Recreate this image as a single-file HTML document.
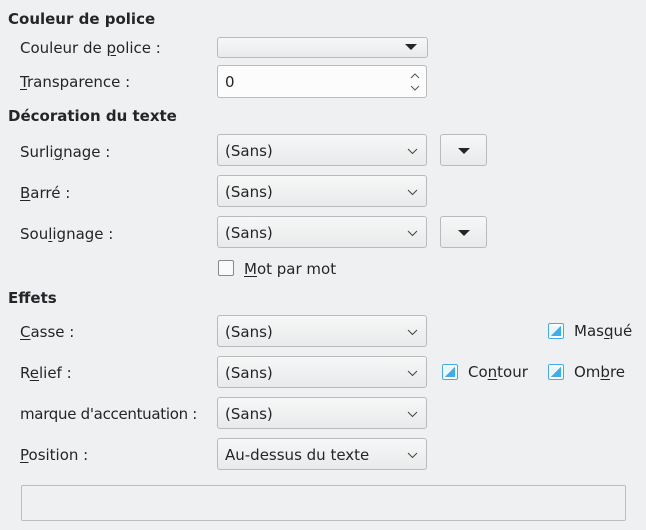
<!DOCTYPE html>
<html><head><meta charset="utf-8"><style>
body{margin:0;width:646px;height:530px;background:#eff0f1;font-family:"DejaVu Sans","Liberation Sans",sans-serif;font-size:15px;color:#232629;position:relative;overflow:hidden}
.a{position:absolute;white-space:nowrap}
.h{font-weight:bold;left:8px}
.l{left:20px}
.cb{position:absolute;left:217px;width:208px;height:30px;border:1px solid #b8babc;border-radius:3px;background:linear-gradient(#f6f7f7,#e9eaeb);box-sizing:content-box}
.cb span{position:absolute;left:7px;top:7px}
.cb svg{position:absolute;right:8px;top:13px}
.btn{position:absolute;left:440px;width:45px;height:30px;border:1px solid #b8babc;border-radius:3px;background:linear-gradient(#f6f7f7,#e9eaeb)}
.tri{position:absolute;width:0;height:0;border-left:6px solid transparent;border-right:6px solid transparent;border-top:6px solid #232629}
.ck{position:absolute;width:14px;height:14px;border:1px solid #3daee9;border-radius:2px;background:#fff}
.ck i{position:absolute;left:2px;top:2px;width:10px;height:10px;background:linear-gradient(135deg,#eaf6fd 50%,#3daee9 50%)}
u{text-decoration:underline;text-underline-offset:2px}
</style></head><body>
<div class="a h" style="top:10px">Couleur de police</div>
<div class="a l" style="top:39px">Couleur de <u>p</u>olice :</div>
<div class="cb" style="top:37px;height:19px;width:209px"><div class="tri" style="right:10px;top:6px"></div></div>
<div class="a l" style="top:73px"><u>T</u>ransparence :</div>
<div class="a" style="left:217px;top:65px;width:208px;height:31px;border:1px solid #b8babc;border-radius:3px;background:#fcfcfc"><span class="a" style="left:7px;top:7px">0</span>
<svg class="a" style="right:5px;top:5px" width="12" height="22"><path d="M2 7 L6 3 L10 7 M2 15 L6 19 L10 15" fill="none" stroke="#555" stroke-width="1"/></svg></div>
<div class="a h" style="top:107px">Décoration du texte</div>

<div class="a l" style="top:143px">Surli<u>g</u>nage :</div>
<div class="cb" style="top:134px"><span>(Sans)</span><svg width="11" height="7"><path d="M1 1 L5.5 5.5 L10 1" fill="none" stroke="#444"/></svg></div>
<div class="btn" style="top:134px"><div class="tri" style="left:17px;top:13px"></div></div>

<div class="a l" style="top:184px"><u>B</u>arré :</div>
<div class="cb" style="top:175px"><span>(Sans)</span><svg width="11" height="7"><path d="M1 1 L5.5 5.5 L10 1" fill="none" stroke="#444"/></svg></div>

<div class="a l" style="top:225px">Sou<u>l</u>ignage :</div>
<div class="cb" style="top:216px"><span>(Sans)</span><svg width="11" height="7"><path d="M1 1 L5.5 5.5 L10 1" fill="none" stroke="#444"/></svg></div>
<div class="btn" style="top:216px"><div class="tri" style="left:17px;top:13px"></div></div>

<div class="ck" style="left:218px;top:260px;border-color:#888;background:#fafafa"></div>
<div class="a" style="left:244px;top:260px"><u>M</u>ot par mot</div>

<div class="a h" style="top:289px">Effets</div>
<div class="a l" style="top:323px"><u>C</u>asse :</div>
<div class="cb" style="top:315px"><span>(Sans)</span><svg width="11" height="7"><path d="M1 1 L5.5 5.5 L10 1" fill="none" stroke="#444"/></svg></div>
<div class="ck" style="left:548px;top:323px"><i></i></div>
<div class="a" style="left:574px;top:322px">Mas<u>q</u>ué</div>

<div class="a l" style="top:364px">R<u>e</u>lief :</div>
<div class="cb" style="top:356px"><span>(Sans)</span><svg width="11" height="7"><path d="M1 1 L5.5 5.5 L10 1" fill="none" stroke="#444"/></svg></div>
<div class="ck" style="left:442px;top:364px"><i></i></div>
<div class="a" style="left:468px;top:363px">Co<u>n</u>tour</div>
<div class="ck" style="left:548px;top:364px"><i></i></div>
<div class="a" style="left:574px;top:363px">Om<u>b</u>re</div>

<div class="a l" style="top:405px;letter-spacing:-0.3px">marque d'accentuation :</div>
<div class="cb" style="top:397px"><span>(Sans)</span><svg width="11" height="7"><path d="M1 1 L5.5 5.5 L10 1" fill="none" stroke="#444"/></svg></div>

<div class="a l" style="top:446px"><u>P</u>osition :</div>
<div class="cb" style="top:438px"><span>Au-dessus du texte</span><svg width="11" height="7"><path d="M1 1 L5.5 5.5 L10 1" fill="none" stroke="#444"/></svg></div>

<div class="a" style="left:21px;top:485px;width:603px;height:34px;border:1px solid #bcbebf;border-radius:2px"></div>
</body></html>
